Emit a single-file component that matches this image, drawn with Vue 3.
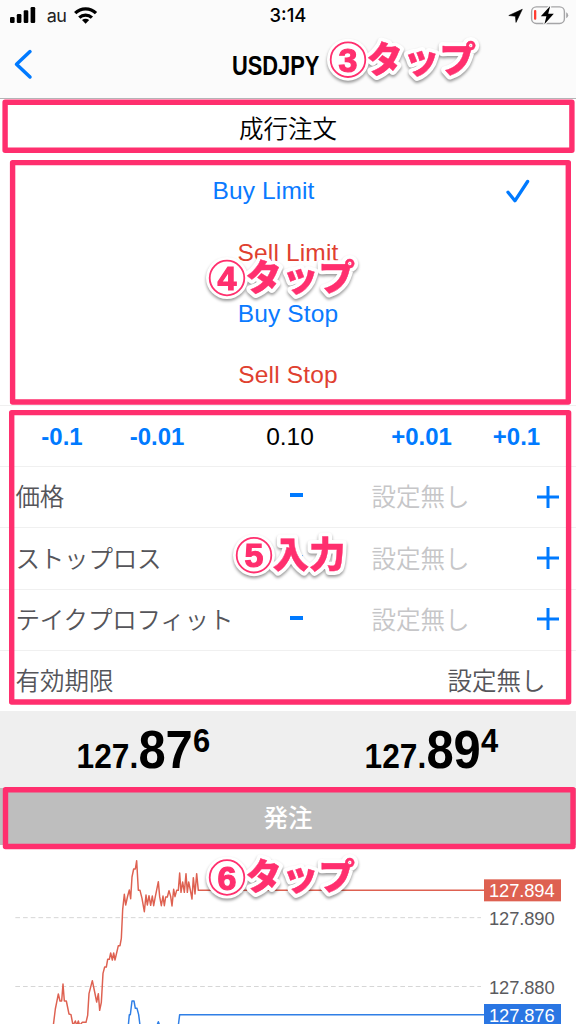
<script setup>
const orderTypes = [
  { label: 'Buy Limit', side: 'buy', checked: true },
  { label: 'Sell Limit', side: 'sell' },
  { label: 'Buy Stop', side: 'buy' },
  { label: 'Sell Stop', side: 'sell' },
]
const fields = ['価格', 'ストップロス', 'テイクプロフィット']
const prices = [
  { big: '87', pip: '6' },
  { big: '89', pip: '4' },
]
const frames = [
  { x: 5.1, y: 102.3, w: 566.8, h: 47.9 },
  { x: 12.6, y: 162.6, w: 555.7, h: 239.4 },
  { x: 11.7, y: 412.6, w: 556.9, h: 289.4 },
  { x: 5.5, y: 789.8, w: 567.5, h: 56.7 },
]
const steps = [
  { n: '3', text: 'タップ', x: 348, y: 59.7 },
  { n: '4', text: 'タップ', x: 227, y: 278 },
  { n: '5', text: '入力', x: 254, y: 555.2 },
  { n: '6', text: 'タップ', x: 227, y: 877.5 },
]
</script>

<template>
  <div class="screen">
    <header class="header">
      <div class="status">
        <svg class="status-left" width="110" height="30" viewBox="0 0 110 30">
          <rect x="10" y="17" width="4.6" height="6" rx="1.2" />
          <rect x="16.8" y="14" width="4.6" height="9" rx="1.2" />
          <rect x="23.7" y="10.2" width="4.6" height="12.8" rx="1.2" />
          <rect x="30.6" y="7" width="4.6" height="16" rx="1.2" />
          <text x="46.8" y="22" class="carrier" textLength="20">au</text>
          <g fill="none" stroke="#000" stroke-width="3.2">
            <path d="M75.2 13.2A14.5 14.5 0 0 1 96 13.2" />
            <path d="M79.3 17.6A9 9 0 0 1 91.9 17.6" />
          </g>
          <path d="M82 20.1Q85.6 17.3 89.2 20.1L85.6 23.8Z" />
        </svg>
        <span class="clock">3:14</span>
        <svg class="status-right" width="76" height="30" viewBox="500 0 76 30">
          <path d="M522.3 9.3L508.8 15.5L515.4 16.2L516 22.4Z" stroke="#000" stroke-width="0.6" stroke-linejoin="round" />
          <rect x="531.6" y="6.9" width="32.8" height="16.6" rx="4.8" fill="none" stroke="#a5a5a7" stroke-width="1.4" />
          <path d="M566.2 12.2Q568.2 13 568.2 15.2T566.2 18.2Z" fill="#a5a5a7" />
          <rect x="534" y="10" width="2.3" height="9.8" rx="1" fill="#ff3b30" />
          <path d="M550.2 6L540.8 16.2H546.4L544.4 24.2L553.8 13.7H548.2Z" stroke="#fbfbfb" stroke-width="2.4" paint-order="stroke" />
        </svg>
      </div>
      <div class="nav">
        <svg class="back" width="36" height="40" viewBox="0 0 36 40">
          <path d="M30 7.6L16.5 20.3L30 33" fill="none" stroke="#007aff" stroke-width="3.5" stroke-linecap="round" stroke-linejoin="round" />
        </svg>
        <svg class="title" width="90" height="34" viewBox="231 50 90 34">
          <text x="232" y="75.2" textLength="87.4" lengthAdjust="spacingAndGlyphs">USDJPY</text>
        </svg>
      </div>
    </header>

    <section class="rows">
      <div class="row market">成行注文</div>
      <div v-for="o in orderTypes" :key="o.label" class="row option" :class="[o.side, { checked: o.checked }]">
        <span>{{ o.label }}</span>
        <svg v-if="o.checked" class="check" width="26" height="26" viewBox="0 0 26 26">
          <path d="M3 14.2L9.9 22.8L22.6 3.5" fill="none" stroke="#007aff" stroke-width="3.3" stroke-linecap="round" stroke-linejoin="round" />
        </svg>
      </div>
      <div class="row volume lined">
        <b>-0.1</b><b>-0.01</b><span>0.10</span><b>+0.01</b><b>+0.1</b>
      </div>
      <div v-for="f in fields" :key="f" class="row field lined">
        <span class="name">{{ f }}</span>
        <i class="minus"></i>
        <span class="unset">設定無し</span>
        <svg class="plus" width="22" height="22" viewBox="0 0 22 22">
          <path d="M0 11H22M11 0V22" stroke="#007aff" stroke-width="3" />
        </svg>
      </div>
      <div class="row expiry lined"><span>有効期限</span><span>設定無し</span></div>
    </section>

    <section class="prices">
      <svg v-for="p in prices" :key="p.big" width="288" height="77" viewBox="0 711.3 288 77">
        <text x="76.6" y="768.2" font-size="35.5" textLength="61.6" lengthAdjust="spacingAndGlyphs">127.</text>
        <text x="138.4" y="768.8" font-size="54.5" textLength="54.4" lengthAdjust="spacingAndGlyphs">{{ p.big }}</text>
        <text x="192.9" y="752.6" font-size="32.5" textLength="17.2" lengthAdjust="spacingAndGlyphs">{{ p.pip }}</text>
      </svg>
    </section>

    <button class="submit">発注</button>

    <svg class="chart" width="576" height="179" viewBox="0 15 1728 537">
      <g stroke="#d6d6d6" stroke-width="3" stroke-dasharray="14 9.1">
        <path d="M46 233H1443M46 439.5H1443" />
      </g>
      <g fill="none" stroke-width="4.4" stroke-linejoin="round">
        <path stroke="#de6151" d="M160 556L166 507L170 487L175 462L180 483H185L189 432L193 483H199L207 522L213 524L219 556L226 543L230 556L235 543L239 556L247 547H258L263 526L267 461L277 422L284 456L290 486L295 461L299 511L304 487L309 400L314 381H319L323 358H328L332 339L337 360L341 339L345 360L355 317H360L364 295L368 209L373 163L377 195L383 168L388 150L392 176L396 111L401 87H406L410 62L415 151H420L426 175L433 215L438 165L442 195L447 167L452 196L457 168L461 197L466 170L475 125L479 170L484 197L489 168L493 197L497 171H502L507 152L512 169L516 198L521 148L525 170L530 151H535L539 99L543 157L548 126L553 157L558 101L562 157L566 126L571 150L576 177L580 113L585 162L590 101L595 151H1453" />
        <path stroke="#2f7fe6" d="M385 556L388 524H391L396 483H402L406 505H411L416 524L420 556M471 556L475 545L479 556M535 556L539 524H1453" />
      </g>
      <rect x="1452" y="118" width="231" height="66" fill="#de6151" />
      <rect x="1452" y="492" width="231" height="66" fill="#2a76e3" />
      <g class="ticks" fill="#5b5b5e">
        <text x="1467" y="172" fill="#fff" textLength="197">127.894</text>
        <text x="1467" y="255" textLength="197">127.890</text>
        <text x="1467" y="462" textLength="197">127.880</text>
        <text x="1467" y="546" fill="#fff" textLength="197">127.876</text>
      </g>
    </svg>

    <svg class="notes" width="576" height="1024" viewBox="0 0 576 1024">
      <defs>
        <text v-for="s in steps" :id="`step-${s.n}`" :key="s.n" x="18.5" y="12.8">{{ s.text }}</text>
      </defs>
      <rect v-for="f in frames" :key="f.y" :x="f.x" :y="f.y" :width="f.w" :height="f.h" class="frame" />
      <g v-for="s in steps" :key="s.n" class="step" :transform="`translate(${s.x} ${s.y})`">
        <circle r="21" fill="#fff" />
        <use :href="`#step-${s.n}`" class="halo" />
        <circle r="17.3" class="ring" />
        <use :href="`#step-${s.n}`" class="label" />
        <text x="0" y="12" class="num">{{ s.n }}</text>
      </g>
    </svg>
  </div>
</template>

<style>
body {
  margin: 0;
  overflow: hidden;
}
</style>

<style scoped>
.screen {
  position: relative;
  width: 576px;
  height: 1024px;
  overflow: hidden;
  background: #fff;
  color: #000;
  font-family: "Liberation Sans", "Noto Sans CJK JP", sans-serif;
  font-size: 24.5px;
}
svg {
  display: block;
}
.header {
  box-sizing: border-box;
  height: 99px;
  background: #fbfbfb;
  border-bottom: 1px solid #b4b4b6;
}
.status {
  display: grid;
  grid-template-columns: 1fr auto 1fr;
  height: 30px;
}
.status-right {
  justify-self: end;
}
.carrier {
  font: 400 18px Inter, sans-serif;
  fill: #222;
}
.clock {
  font: 500 18.4px/31px Inter, sans-serif;
}
.nav {
  display: grid;
  grid-template-columns: 1fr auto 1fr;
  padding-top: 14px;
}
.title {
  margin-top: 6px;
  margin-right: 24px;
  overflow: visible;
  font-weight: 700;
  font-size: 27.8px;
}
.row {
  display: flex;
  box-sizing: border-box;
  height: 61.3px;
  padding-top: 2px;
  align-items: center;
  line-height: 36px;
  font-weight: 350;
}
.lined {
  border-top: 1px solid #f0f0f0;
}
.market {
  justify-content: center;
  height: 60.6px;
}
.option {
  justify-content: center;
}
.buy {
  color: #0a7aff;
}
.sell {
  color: #e0402f;
}
.option span {
  letter-spacing: 0.15px;
}
.checked {
  display: grid;
  grid-template-columns: 527px auto;
  justify-content: start;
}
.checked span {
  text-align: center;
}
.check {
  margin: -1px 0 0 -22px;
}
.volume {
  display: grid;
  grid-template-columns: 96px 94px 172px 91px 99px;
  justify-content: start;
  padding-left: 14px;
  text-align: center;
}
.volume b {
  color: #007aff;
  font-size: 24px;
  font-weight: 700;
}
.field,
.expiry {
  padding-left: 15.5px;
  color: #55555a;
}
.name {
  width: 274.5px;
  letter-spacing: -0.2px;
}
.minus {
  width: 13px;
  height: 4px;
  margin-top: -6px;
  background: #007aff;
}
.unset {
  margin-left: 68.5px;
  color: #c6c6c8;
}
.plus {
  margin: -3px 0 0 67.5px;
}
.expiry {
  justify-content: space-between;
  padding-right: 30.5px;
}
.prices {
  display: flex;
  height: 77px;
  background: #efefef;
  font-weight: 700;
}
.submit {
  display: block;
  width: 100%;
  height: 56.5px;
  padding: 0;
  border: 0;
  background: #bebebe;
  color: #fff;
  font: 500 24.5px/54px "Noto Sans CJK JP", sans-serif;
}
.ticks {
  font-size: 55px;
}
.notes {
  position: absolute;
  inset: 0;
  font: 900 36.5px "Noto Sans CJK JP", sans-serif;
}
.frame {
  fill: none;
  stroke: #ff2f6e;
  stroke-width: 5.4;
  stroke-linejoin: round;
}
.step {
  fill: #ff2f6e;
  filter: drop-shadow(0 2px 1.5px rgba(0, 0, 0, 0.4));
}
.halo {
  fill: #fff;
  stroke: #fff;
  stroke-width: 8px;
  stroke-linejoin: round;
}
.label {
  stroke: #ff2f6e;
  stroke-width: 0.4px;
}
.ring {
  fill: #fff;
  stroke: #ff2f6e;
  stroke-width: 1.8;
}
.num {
  font: 700 34px "Liberation Sans", sans-serif;
  stroke: #ff2f6e;
  stroke-width: 1.2px;
  text-anchor: middle;
}
</style>
